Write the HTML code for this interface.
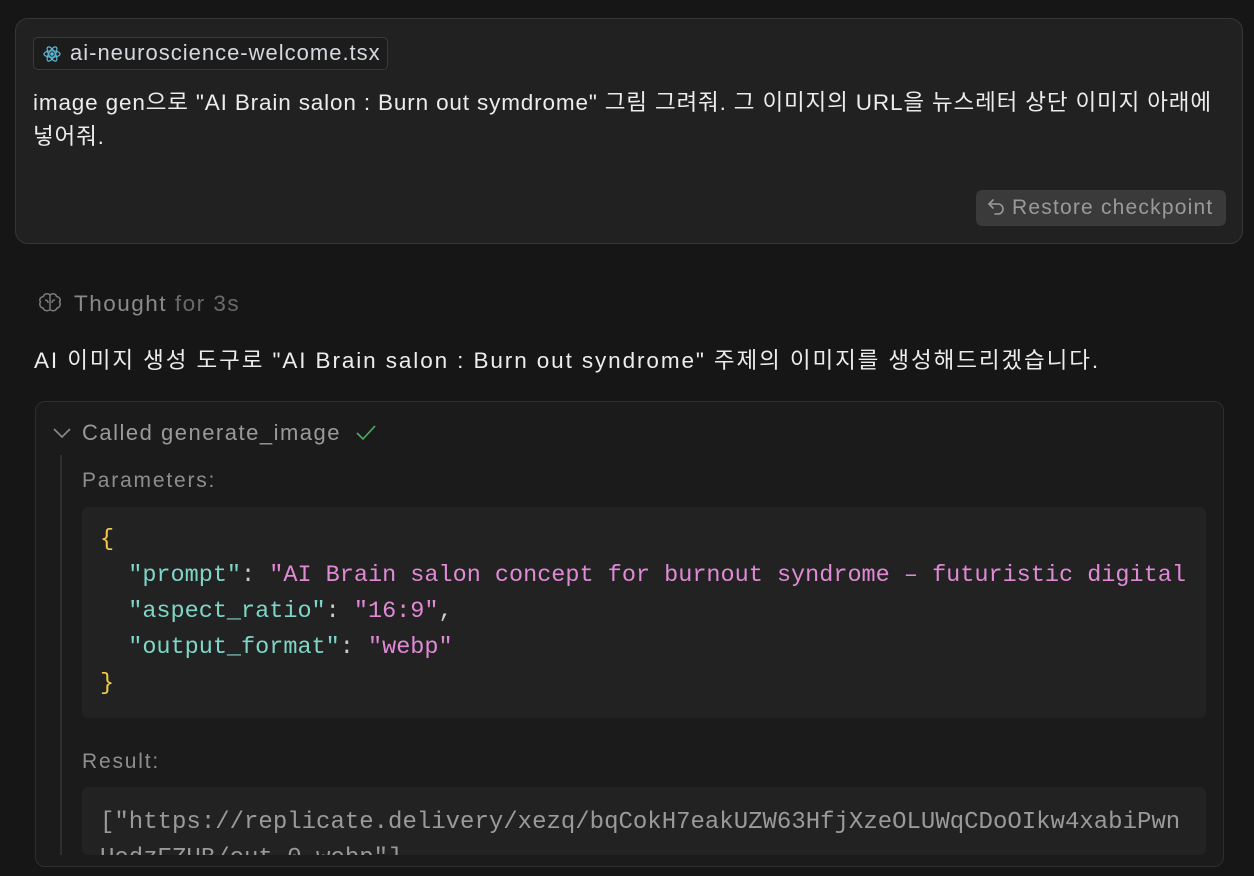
<!DOCTYPE html>
<html><head><meta charset="utf-8"><style>
*{margin:0;padding:0;box-sizing:border-box}
body{width:1254px;height:876px;overflow:hidden;background:#161616;font-family:"Liberation Sans","Noto Sans CJK KR",sans-serif;color:#e6e6e6;position:relative}
.abs{position:absolute}
.card{left:15px;top:18px;width:1228px;height:226px;background:#212121;border:1.5px solid #363636;border-radius:13px}
.chip{left:33px;top:37px;width:355px;height:33px;border:1.5px solid #3a3a3a;border-radius:5px;background:#1c1c1c;font-size:22px;letter-spacing:1px;color:#d6d8e0;line-height:30px;padding-left:36px;white-space:nowrap}
.msg{left:33px;top:86px;width:1215px;font-size:22.5px;letter-spacing:0.85px;line-height:34px;color:#ececec}
.btn{left:976px;top:190px;width:250px;height:36px;background:#3a3a3a;border-radius:6px;color:#9a9a9a;font-size:21px;letter-spacing:1.2px;line-height:36px;padding-left:36px;white-space:nowrap}
.thought{left:74px;top:290px;font-size:22.5px;letter-spacing:1.5px;color:#8a8a8a;line-height:28px}
.para{left:34px;top:346px;font-size:22.5px;letter-spacing:1.9px;color:#ececec;line-height:30px;white-space:nowrap}
.tool{left:35px;top:401px;width:1189px;height:466px;background:#1b1b1b;border:1.5px solid #2e2e2e;border-radius:10px;overflow:hidden}
.mono{font-family:"Liberation Mono","DejaVu Sans Mono",monospace}
.code{left:82px;top:507px;width:1124px;height:211px;background:#222;border-radius:6px;overflow:hidden}
.codein{position:absolute;left:18px;top:15px;width:1090px;overflow:hidden;font-size:23.5px;line-height:36px;white-space:pre;color:#ccc}
.k{color:#7fd6c8}.s{color:#e08ad6}.b{color:#f2c94c}
.res{left:82px;top:787px;width:1124px;height:68px;background:#222;border-radius:6px;overflow:hidden;font-size:24px;line-height:36px;padding:18px 0 0 18px;white-space:pre;color:#9a9a9a}
.lbl{left:82px;font-size:21px;letter-spacing:1.8px;color:#8e8e8e;line-height:28px}
</style></head><body>
<div class="abs card"></div>
<div class="abs chip">ai-neuroscience-welcome.tsx</div>
<svg class="abs" style="left:42px;top:44px" width="20" height="20" viewBox="0 0 20 20" fill="none" stroke="#5fb8d6" stroke-width="1.2"><ellipse cx="10" cy="10" rx="8" ry="3.2"/><ellipse cx="10" cy="10" rx="8" ry="3.2" transform="rotate(60 10 10)"/><ellipse cx="10" cy="10" rx="8" ry="3.2" transform="rotate(120 10 10)"/><circle cx="10" cy="10" r="1.2" fill="#5fb8d6"/></svg>
<div class="abs msg">image gen으로 "AI Brain salon : Burn out symdrome" 그림 그려줘. 그 이미지의 URL을 뉴스레터 상단 이미지 아래에<br>넣어줘.</div>
<div class="abs btn">Restore checkpoint</div>
<svg class="abs" style="left:987px;top:197px" width="20" height="22" viewBox="0 0 20 22" fill="none" stroke="#9a9a9a" stroke-width="1.6" stroke-linecap="round" stroke-linejoin="round"><path d="M6 3L2 7l4 4"/><path d="M2 7h9a5 5 0 0 1 0 10H8"/></svg>
<svg class="abs" style="left:37px;top:292px" width="26" height="22" viewBox="0 0 26 22" fill="none" stroke="#7a7a7a" stroke-width="1.5"><path d="M13 3c-2-2-6-1.5-6.5 1.5C3 5 2 8 3.5 10 2 12 3 15.5 6 16c1 3 5 3.5 7 1.5 2 2 6 1.5 7-1.5 3-.5 4-4 2.5-6C24 8 23 5 19.5 4.5 19 1.5 15 1 13 3z"/><path d="M13 3v14M8 8c2 0 3 1 3 3M18 8c-2 0-3 1-3 3"/></svg>
<div class="abs thought">Thought <span style="color:#6a6a6a">for 3s</span></div>
<div class="abs para">AI 이미지 생성 도구로 "AI Brain salon : Burn out syndrome" 주제의 이미지를 생성해드리겠습니다.</div>
<div class="abs tool"></div>
<svg class="abs" style="left:51px;top:424px" width="22" height="18" viewBox="0 0 22 18" fill="none" stroke="#8a8a8a" stroke-width="1.6"><path d="M3 5l8 8 8-8"/></svg>
<div class="abs" style="left:82px;top:419px;font-size:22px;letter-spacing:1.5px;color:#9a9a9a;line-height:28px">Called generate_image</div>
<svg class="abs" style="left:355px;top:423px" width="22" height="20" viewBox="0 0 22 20" fill="none" stroke="#4caf62" stroke-width="1.6"><path d="M2 10l6 6L20 3"/></svg>
<div class="abs" style="left:60px;top:455px;width:2px;height:400px;background:#2e2e2e"></div>
<div class="abs lbl" style="top:467px">Parameters:</div>
<div class="abs code"><div class="codein mono"><span class="b">{</span>
  <span class="k">"prompt"</span>: <span class="s">"AI Brain salon concept for burnout syndrome – futuristic digital salon"</span>,
  <span class="k">"aspect_ratio"</span>: <span class="s">"16:9"</span>,
  <span class="k">"output_format"</span>: <span class="s">"webp"</span>
<span class="b">}</span></div></div>
<div class="abs lbl" style="top:748px">Result:</div>
<div class="abs res mono">["https://replicate.delivery/xezq/bqCokH7eakUZW63HfjXzeOLUWqCDoOIkw4xabiPwn
UedzEZUB/out-0.webp"]</div>
<div class="abs" style="left:36px;top:855px;width:1187px;height:11px;background:#1b1b1b;border-radius:0 0 10px 10px"></div>
</body></html>
